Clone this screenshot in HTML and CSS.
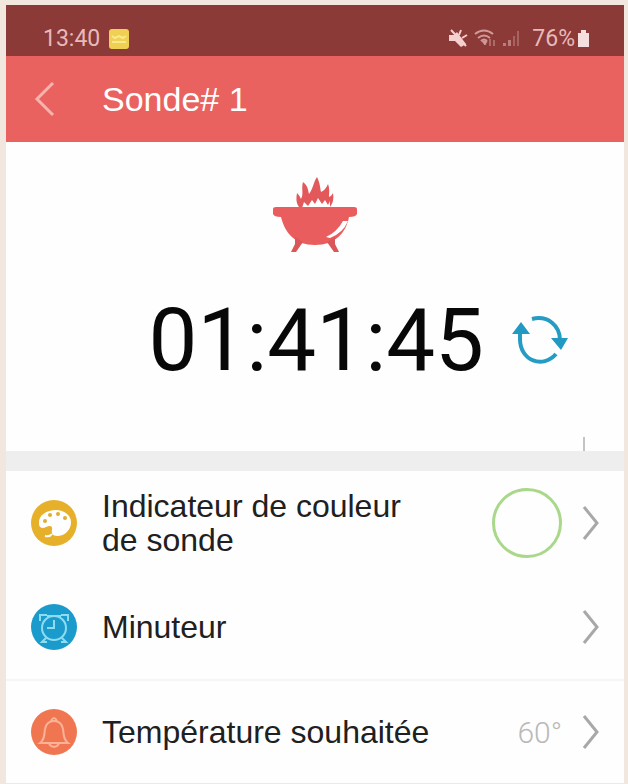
FILE: index.html
```html
<!DOCTYPE html>
<html lang="fr">
<head>
    <meta charset="UTF-8">
    <meta name="viewport" content="width=device-width, initial-scale=1.0">
    <title>Sonde# 1</title>
    <link rel="stylesheet" href="styles.css">
</head>
<body>
    <div class="status-bar">
        <span class="time">13:40</span>
        <svg class="note" width="22" height="22" viewBox="0 0 22 22">
            <rect x="1" y="1" width="20" height="20" rx="3" fill="#efd052"/>
            <path d="M4 8l3 2 4-2 4 2 3-2M4 14h14" fill="none" stroke="#fae98c" stroke-width="2"/>
        </svg>
        <div class="status-icons">
            <svg width="20" height="20" viewBox="0 0 20 20">
                <path d="M1 6h5l3-3 9 12-5 3-6-6H1z" fill="#f6cfcf"/>
                <path d="M3 1l15 16M11 6l2-5M14 9l5-3" stroke="#f6cfcf" stroke-width="2"/>
            </svg>
            <svg width="22" height="20" viewBox="0 0 22 20">
                <path d="M1 5q9-7 18 0M4 9q6-5 12 0M7 12q3-3 6 0" fill="none" stroke="#d09a9a" stroke-width="2"/>
                <path d="M8 12h5l-2 4zM16 10v7M20 11v6" fill="#d09a9a" stroke="#d09a9a"/>
            </svg>
            <svg width="18" height="20" viewBox="0 0 18 20">
                <path d="M1 17v-3h3v3zM6 17v-6h3v6z" fill="#bd7c7c"/>
                <path d="M12 17V7M16 17V2" stroke="#a86262" stroke-width="2"/>
            </svg>
        </div>
        <span class="percent">76%</span>
        <svg class="battery" width="13" height="18" viewBox="0 0 13 18">
            <path d="M4 0h5v3h3v14H1V3h3z" fill="#f4dede"/>
        </svg>
    </div>

    <header class="header">
        <button class="back" aria-label="Retour">
            <svg width="22" height="36" viewBox="0 0 22 36">
                <path d="M19 2L3 18l16 16" fill="none" stroke="#f7b3ad" stroke-width="3"/>
            </svg>
        </button>
        <h1>Sonde# 1</h1>
    </header>

    <main>
        <section class="timer">
            <svg class="grill" width="86" height="76" viewBox="0 0 86 76">
                <path d="M28 31C24 27 24 22 25 16q3 3 4 6c3-5 0-10 2-17 5 4 5 8 6 12 4-5 4-11 8-17 3 6 3 10 4 15 4-2 5-4 7-8 2 6 1 9 1 13 2-1 3-2 4-4 1 6 0 11-4 15z" fill="#e2585b"/>
                <path d="M30 31l2-6 4 4 4-6 3 4 3-6 4 6 3-4 3 5 2-4v7z" fill="#fff"/>
                <path d="M1 32q0-2 3-2h78q3 0 3 2v5q-1 3-8 3C74 56 63 68 43 68S13 56 9 40q-7 0-8-3z" fill="#ea5d5e"/>
                <path d="M23 60l8 5-7 10h-5l4-8zM63 60l-8 5 7 10h5l-4-8z" fill="#d95758"/>
                <path d="M54 60q11-5 17-16h5Q71 56 58 61z" fill="#fff"/>
            </svg>
            <div class="clock-line">
                <time class="clock">01:41:45</time>
                <button class="reset" aria-label="Réinitialiser">
                    <svg width="56" height="50" viewBox="0 0 56 50">
                        <path d="M20 4C36 0 48 11 48 25M44 39C31 54 8 46 8 24V16" fill="none" stroke="#259cc4" stroke-width="4"/>
                        <path d="M0 19L9 7l9 12zM39 23h17l-7 12z" fill="#2199c2"/>
                    </svg>
                </button>
            </div>
            <span class="tick"></span>
        </section>

        <nav class="settings">
            <a class="row" href="#couleur">
                <svg class="icon" width="48" height="48" viewBox="0 0 48 48">
                    <circle cx="24" cy="24" r="23" fill="#e6b02b"/>
                    <path d="M9 25C8 16 17 11 26 11c8 0 15 5 15 12 0 8-6 14-14 14-4 0-6-3-5-6 1-4-2-5-6-3-3 2-7 1-7-3z" fill="#fff"/>
                    <path d="M15 37q5 1 7-2" fill="none" stroke="#fff" stroke-width="2"/>
                    <g fill="#e0ad35">
                        <circle cx="15" cy="22" r="2"/>
                        <circle cx="20" cy="16" r="2"/>
                        <circle cx="28" cy="15" r="2"/>
                        <circle cx="35" cy="19" r="2"/>
                    </g>
                </svg>
                <span class="label">Indicateur de couleur<br>de sonde</span>
                <span class="color-ring"></span>
                <svg class="chevron" width="18" height="36" viewBox="0 0 18 36">
                    <path d="M2 2l13 16L2 34" fill="none" stroke="#a8a8a8" stroke-width="3"/>
                </svg>
            </a>
            <a class="row" href="#minuteur">
                <svg class="icon" width="48" height="48" viewBox="0 0 48 48">
                    <circle cx="24" cy="24" r="23" fill="#1b9bcc"/>
                    <g fill="none" stroke="#8edcf2" stroke-width="2">
                        <circle cx="24" cy="25" r="12"/>
                        <path d="M24 17v8h-7M10 18v-6h7M38 18v-6h-7M16 35l-4 4h5M32 35l4 4h-5M17 13h14"/>
                    </g>
                </svg>
                <span class="label">Minuteur</span>
                <svg class="chevron" width="18" height="36" viewBox="0 0 18 36">
                    <path d="M2 2l13 16L2 34" fill="none" stroke="#a8a8a8" stroke-width="3"/>
                </svg>
            </a>
            <a class="row divided" href="#temperature">
                <svg class="icon" width="48" height="48" viewBox="0 0 48 48">
                    <circle cx="24" cy="24" r="23" fill="#ef7650"/>
                    <path d="M10 35c5-4 4-8 5-14 1-5 4-8 9-8s8 3 9 8c1 6 0 10 5 14zM21 13q3-6 6 0M19 36q5 6 10 0" fill="none" stroke="#fbb296" stroke-width="2"/>
                </svg>
                <span class="label">Température souhaitée</span>
                <span class="value">60°</span>
                <svg class="chevron" width="18" height="36" viewBox="0 0 18 36">
                    <path d="M2 2l13 16L2 34" fill="none" stroke="#a8a8a8" stroke-width="3"/>
                </svg>
            </a>
        </nav>
    </main>
</body>
</html>
```
FILE: styles.css
```css
* {
    box-sizing: border-box;
}

body {
    margin: 0;
    padding: 5px 4px 1px 6px;
    background-color: #f1e7de;
    font-family: "Liberation Sans", Arial, sans-serif;
    color: #202020;
}

button {
    padding: 0;
    border: none;
    background: none;
    cursor: pointer;
}

svg {
    display: block;
    flex-shrink: 0;
}

.status-bar {
    display: flex;
    align-items: center;
    height: 51px;
    padding: 16px 34px 0 37px;
    background-color: #8b3a38;
    color: #e8b9b9;
    font-family: Roboto, sans-serif;
    font-size: 23px;
}

.note {
    margin-left: 8px;
}

.status-icons {
    display: flex;
    gap: 6px;
    margin-left: auto;
}

.percent {
    margin-left: 12px;
}

.battery {
    margin-left: 2px;
}

.header {
    display: flex;
    align-items: center;
    gap: 46px;
    height: 86px;
    padding-left: 28px;
    background-color: #e9625f;
}

.header h1 {
    margin: 0;
    color: #fff;
    font-size: 34px;
    font-weight: normal;
}

.timer {
    position: relative;
    height: 309px;
    padding-top: 35px;
    background-color: #fefefe;
}

.grill {
    margin: 0 auto;
}

.clock-line {
    display: flex;
    align-items: center;
    justify-content: flex-end;
    gap: 28px;
    margin-top: 36px;
    padding-right: 56px;
}

.clock {
    color: #080808;
    font-family: Roboto, sans-serif;
    font-size: 87px;
    line-height: 102px;
}

.tick {
    position: absolute;
    right: 39px;
    bottom: 0;
    width: 2px;
    height: 14px;
    background-color: #c4c4c4;
}

.settings {
    border-top: 20px solid #eeeeee;
}

.row {
    display: flex;
    align-items: center;
    height: 104px;
    padding: 0 24px;
    background-color: #fefefe;
    color: inherit;
    text-decoration: none;
}

.divided {
    border-top: 2px solid #f6f6f6;
}

.label {
    flex: 1;
    margin-left: 24px;
    font-size: 32px;
    line-height: 34px;
}

.color-ring {
    width: 70px;
    height: 70px;
    border: 3px solid #a9d88b;
    border-radius: 50%;
}

.value {
    color: #b9b9b9;
    font-family: Roboto, sans-serif;
    font-size: 30px;
    font-weight: 300;
}

.chevron {
    margin-left: 20px;
}
```
